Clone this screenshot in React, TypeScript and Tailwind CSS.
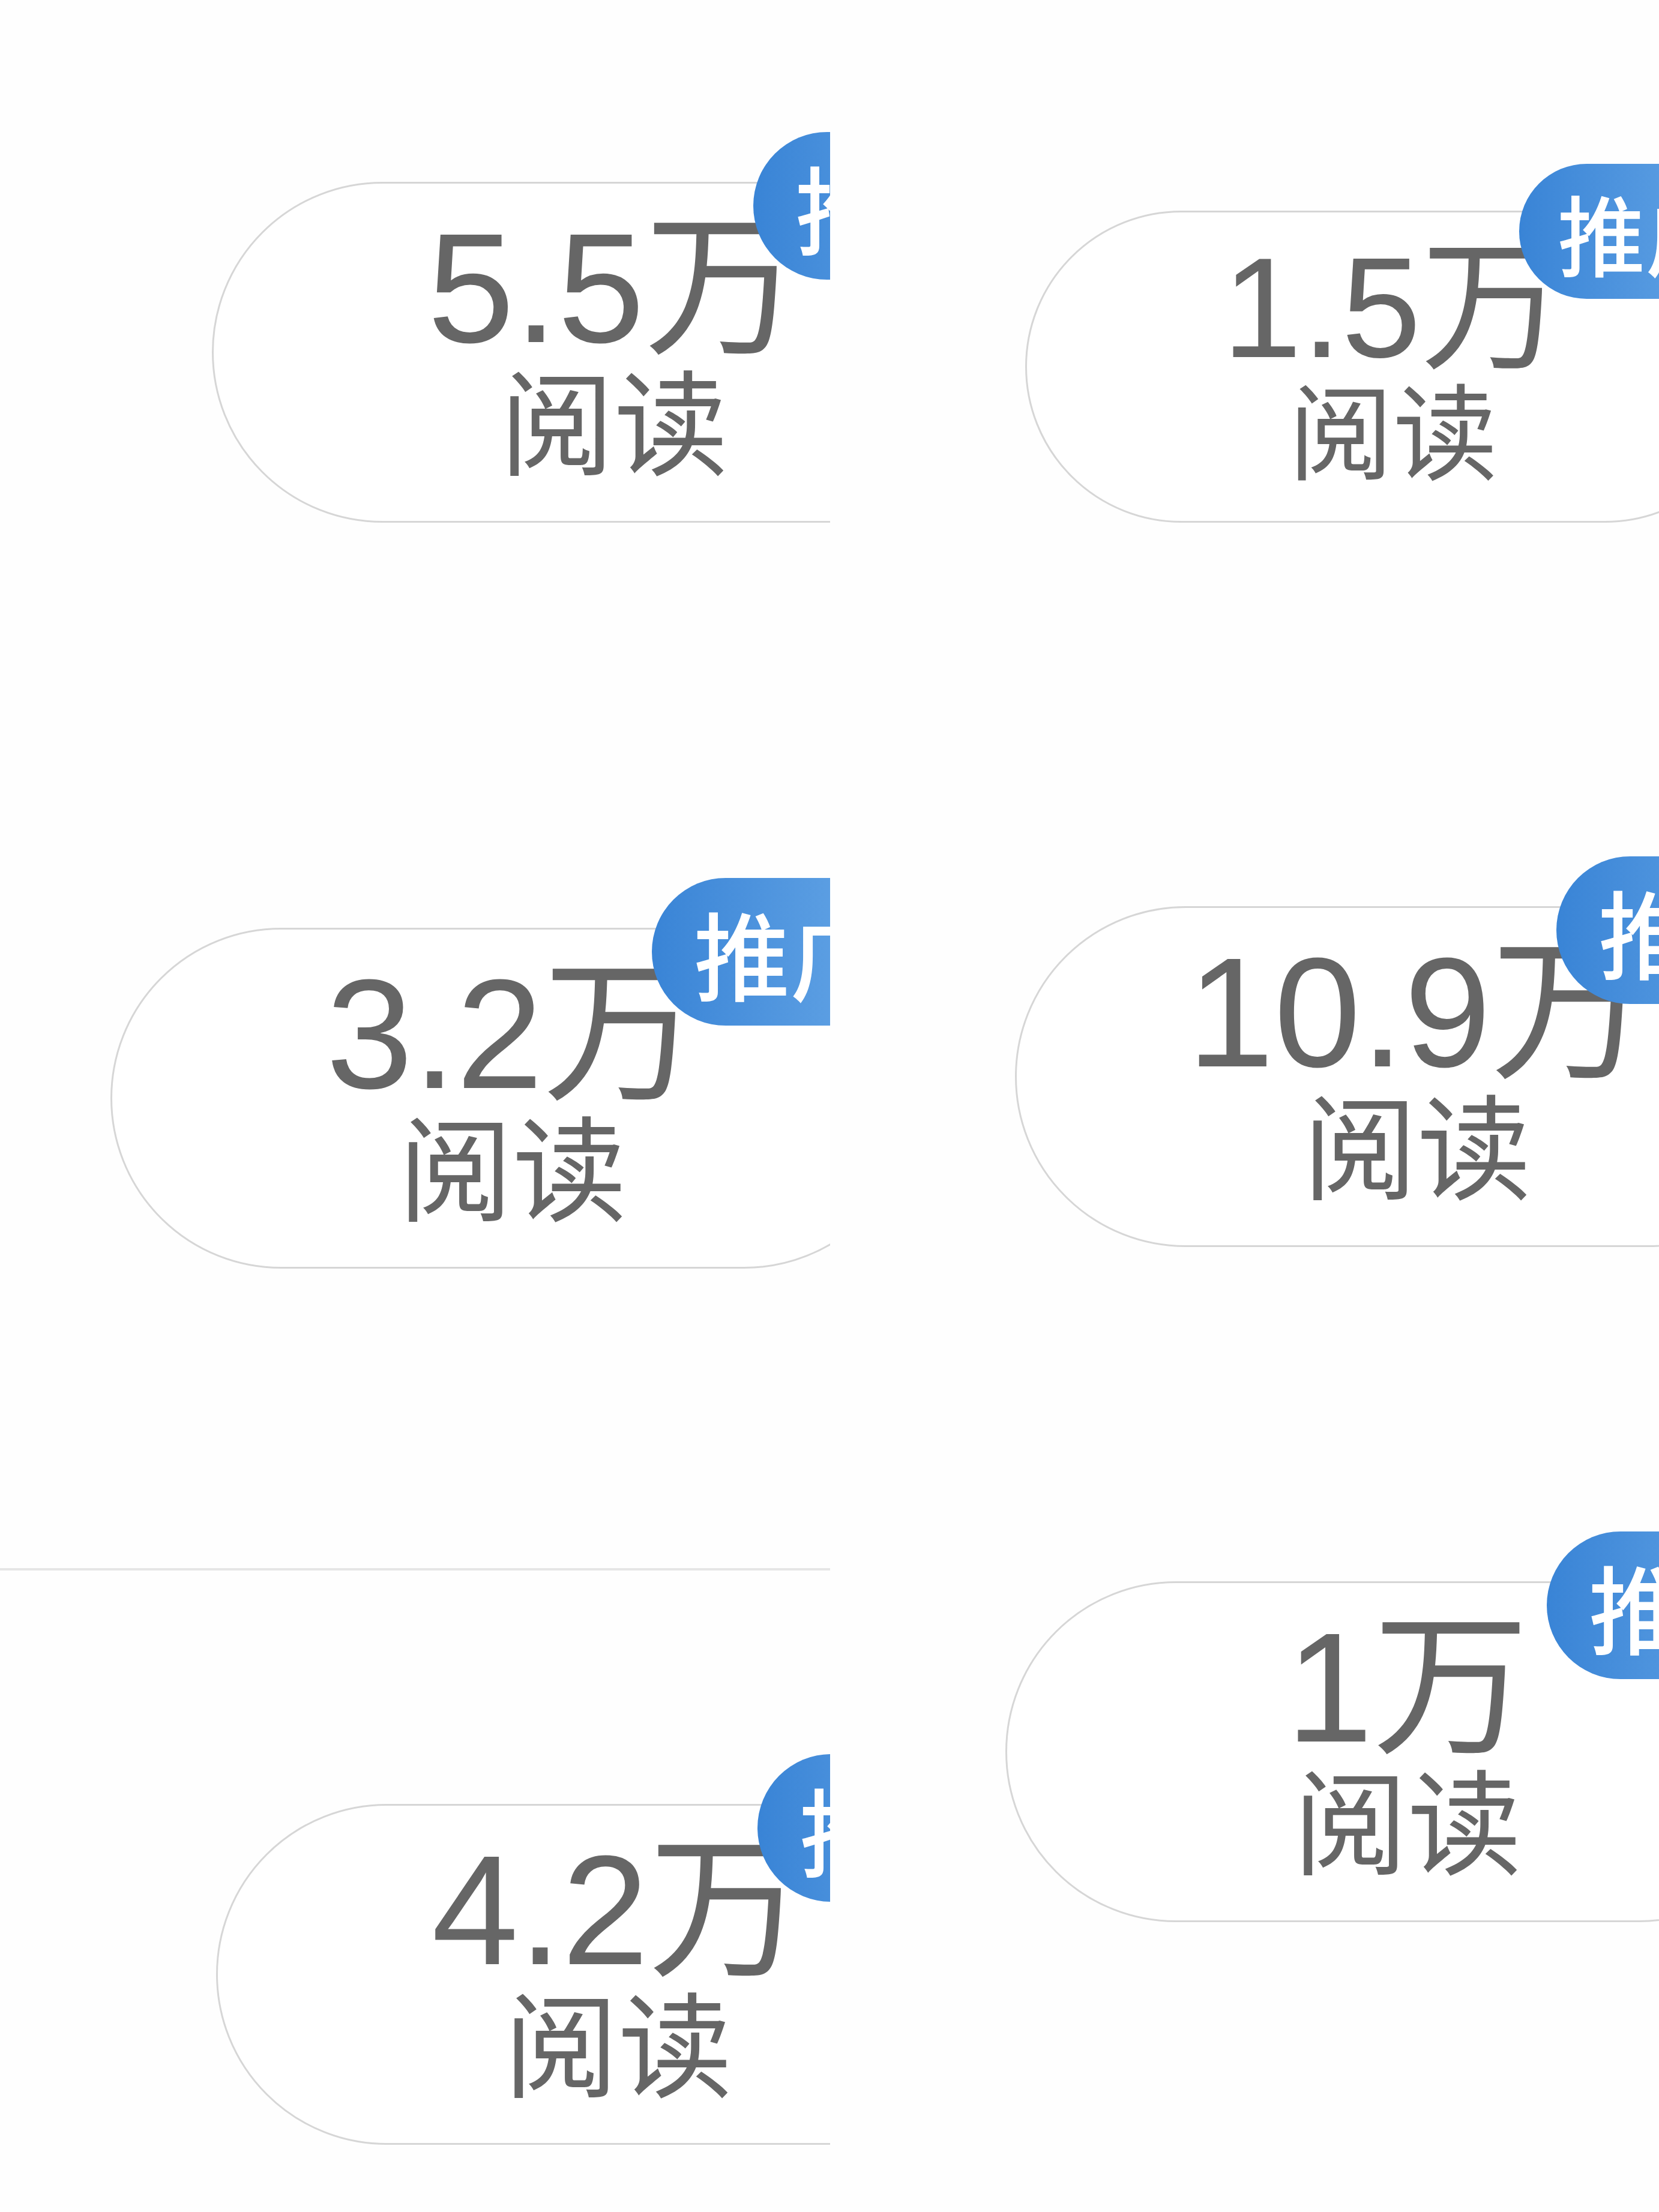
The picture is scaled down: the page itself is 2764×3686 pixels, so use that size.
import React from "react";

type CellProps = {
  num: string;
  small?: boolean;
  cellCls: string;
  pillWrapCls: string;
};

const pillBig =
  "relative flex flex-col items-center shrink-0 w-[1340px] h-[568px] pt-[44px] rounded-full border-[3px] border-[#d6d6d6] bg-white";
const pillSmall =
  "relative flex flex-col items-center shrink-0 w-[1226px] h-[520px] pt-[40px] rounded-full border-[3px] border-[#d6d6d6] bg-white";

const numBig =
  "block leading-none whitespace-nowrap text-[260px] text-[#666666] font-['Liberation_Sans','Noto_Sans_CJK_SC',sans-serif]";
const numSmall =
  "block leading-none whitespace-nowrap text-[238px] text-[#666666] font-['Liberation_Sans','Noto_Sans_CJK_SC',sans-serif]";

const labelBig =
  "block leading-none whitespace-nowrap mt-[-10px] text-[190px] text-[#666666] font-['Noto_Sans_CJK_SC',sans-serif]";
const labelSmall =
  "block leading-none whitespace-nowrap mt-[-9px] text-[174px] text-[#666666] font-['Noto_Sans_CJK_SC',sans-serif]";

const badgeBig =
  "absolute left-[899px] top-[-86px] w-[440px] h-[246px] pl-[70px] flex items-center rounded-full bg-linear-to-r from-[#3984d6] to-[#6aaae8]";
const badgeSmall =
  "absolute left-[820px] top-[-81px] w-[403px] h-[225px] pl-[64px] flex items-center rounded-full bg-linear-to-r from-[#3984d6] to-[#6aaae8]";

const badgeTextBig =
  "leading-none whitespace-nowrap text-[160px] font-medium text-white font-['Noto_Sans_CJK_SC',sans-serif]";
const badgeTextSmall =
  "leading-none whitespace-nowrap text-[146px] font-medium text-white font-['Noto_Sans_CJK_SC',sans-serif]";

function Pill({ num, small }: { num: string; small?: boolean }) {
  return (
    <div className={small ? pillSmall : pillBig}>
      <span className={small ? numSmall : numBig}>{num}</span>
      <span className={small ? labelSmall : labelBig}>阅读</span>
      <div className={small ? badgeSmall : badgeBig}>
        <span className={small ? badgeTextSmall : badgeTextBig}>推广</span>
      </div>
    </div>
  );
}

function Cell({ num, small, cellCls, pillWrapCls }: CellProps) {
  return (
    <div className={`relative overflow-hidden shrink-0 ${cellCls}`}>
      <div className={pillWrapCls}>
        <Pill num={num} small={small} />
      </div>
    </div>
  );
}

export default function App() {
  return (
    <div className="w-[2764px] h-[3686px] bg-[#fefefe] flex overflow-hidden">
      {/* left column */}
      <div className="w-[1383px] shrink-0 flex flex-col overflow-hidden">
        <Cell
          num="5.5万"
          cellCls="h-[1230px] pt-[303px]"
          pillWrapCls="pl-[353px] flex"
        />
        <Cell
          num="3.2万"
          cellCls="h-[1230px] pt-[316px]"
          pillWrapCls="pl-[184px] flex"
        />
        <div className="relative overflow-hidden shrink-0 h-[1226px] pt-[153px]">
          <div className="h-[4px] w-full bg-[#e6e6e6]" />
          <div className="mt-[389px] pl-[360px] flex">
            <Pill num="4.2万" />
          </div>
        </div>
      </div>
      {/* right column */}
      <div className="flex-1 flex flex-col overflow-hidden">
        <Cell
          num="1.5万"
          small
          cellCls="h-[1180px] pt-[351px]"
          pillWrapCls="pl-[325px] flex"
        />
        <Cell
          num="10.9万"
          cellCls="h-[1220px] pt-[330px]"
          pillWrapCls="pl-[308px] flex"
        />
        <Cell
          num="1万"
          cellCls="h-[1286px] pt-[235px]"
          pillWrapCls="pl-[292px] flex"
        />
      </div>
    </div>
  );
}
